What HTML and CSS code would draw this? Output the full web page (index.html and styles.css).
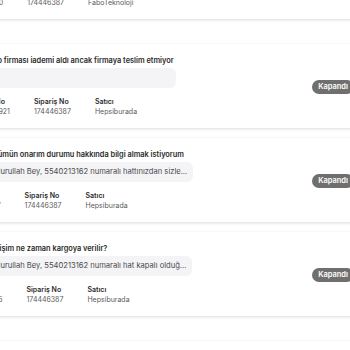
FILE: index.html
```html
<!DOCTYPE html>
<html lang="tr">
<head>
    <meta charset="UTF-8">
    <meta name="viewport" content="width=device-width, initial-scale=1.0">
    <title>Taleplerim</title>
    <link rel="stylesheet" href="styles.css">
</head>
<body>
    <div class="list">
        <div class="card">
            <div class="content">
                <div class="title">Ürünüm ne zaman teslim edilecek?</div>
                <div class="preview">Sn. Nurullah Bey, talebiniz incelenmiştir...</div>
                <div class="details">
                    <div class="col"><span class="label">Talep</span><span class="value">17444600</span></div>
                    <div class="col"><span class="label">Sipariş No</span><span class="value">174446387</span></div>
                    <div class="col"><span class="label">Satıcı</span><span class="value">FaboTeknoloji</span></div>
                </div>
            </div>
            <span class="badge">Kapandı</span>
        </div>

        <div class="card spaced">
            <div class="content">
                <div class="title">Bir kargo firması iademi aldı ancak firmaya teslim etmiyor</div>
                <div class="preview empty"></div>
                <div class="details">
                    <div class="col"><span class="label">Destek No</span><span class="value">1744452921</span></div>
                    <div class="col"><span class="label">Sipariş No</span><span class="value">174446387</span></div>
                    <div class="col"><span class="label">Satıcı</span><span class="value">Hepsiburada</span></div>
                </div>
            </div>
            <span class="badge">Kapandı</span>
        </div>

        <div class="card">
            <div class="content">
                <div class="title">Bu ürünümün onarım durumu hakkında bilgi almak istiyorum</div>
                <div class="preview">Sn. Nurullah Bey, 5540213162 numaralı hattınızdan sizle...</div>
                <div class="details">
                    <div class="col"><span class="label">Talep</span><span class="value">17445177</span></div>
                    <div class="col"><span class="label">Sipariş No</span><span class="value">174446387</span></div>
                    <div class="col"><span class="label">Satıcı</span><span class="value">Hepsiburada</span></div>
                </div>
            </div>
            <span class="badge">Kapandı</span>
        </div>

        <div class="card">
            <div class="content">
                <div class="title">Bir siparişim ne zaman kargoya verilir?</div>
                <div class="preview">Sn. Nurullah Bey, 5540213162 numaralı hat kapalı olduğ...</div>
                <div class="details">
                    <div class="col"><span class="label">Talep</span><span class="value">17445255</span></div>
                    <div class="col"><span class="label">Sipariş No</span><span class="value">174446387</span></div>
                    <div class="col"><span class="label">Satıcı</span><span class="value">Hepsiburada</span></div>
                </div>
            </div>
            <span class="badge">Kapandı</span>
        </div>

        <div class="card spaced">
            <div class="content">
                <div class="title">Faturamı nereden indirebilirim?</div>
                <div class="preview">Sn. Nurullah Bey, faturanız e-posta adresinize...</div>
                <div class="details">
                    <div class="col"><span class="label">Talep</span><span class="value">17445300</span></div>
                    <div class="col"><span class="label">Sipariş No</span><span class="value">174446387</span></div>
                    <div class="col"><span class="label">Satıcı</span><span class="value">Hepsiburada</span></div>
                </div>
            </div>
            <span class="badge">Kapandı</span>
        </div>
    </div>
</body>
</html>
```

FILE: styles.css
```css
body {
    font-family: Inter, "Noto Sans", sans-serif;
    background-color: #fff;
    margin: 0;
    padding: 0;
    overflow: hidden;
}
.list {
    display: flex;
    flex-direction: column;
    gap: 10px;
    width: 416px;
    margin-left: -46px;
    margin-top: -65px; /* sayfa aşağı kaydırılmış */
}
.card {
    display: flex;
    align-items: center;
    background-color: #fff;
    padding: 12px 16px 11px;
    box-shadow: 0 1px 3px rgba(0, 0, 0, 0.14);
    height: 84px;
    box-sizing: border-box;
}
.card.spaced {
    margin-top: 15px;
}
.content {
    flex: 1;
    min-width: 0;
}
.title {
    font-size: 7.4px;
    line-height: 10px;
    font-weight: 600;
    color: #2b2b2b;
    white-space: nowrap;
}
.preview {
    margin-top: 2px;
    width: fit-content;
    padding: 5px 6px 5px 11px;
    background-color: #f4f4f6;
    border-radius: 6px;
    font-size: 7.6px;
    line-height: 10px;
    color: #4a4a4a;
    white-space: nowrap;
}
.preview.empty {
    width: 189px;
    height: 10px;
    box-sizing: content-box;
}
.details {
    display: flex;
    gap: 24px;
    margin-top: 9px;
}
.col {
    display: flex;
    flex-direction: column;
}
.label {
    font-size: 7px;
    line-height: 10px;
    font-weight: 600;
    color: #2b2b2b;
}
.value {
    font-size: 7px;
    line-height: 10px;
    color: #5a5a5a;
}
.badge {
    flex-shrink: 0;
    background-color: #6f6f6f;
    color: #fff;
    font-size: 7.5px;
    font-weight: 600;
    line-height: 14px;
    padding: 0 6px;
    border-radius: 7px;
}
```
